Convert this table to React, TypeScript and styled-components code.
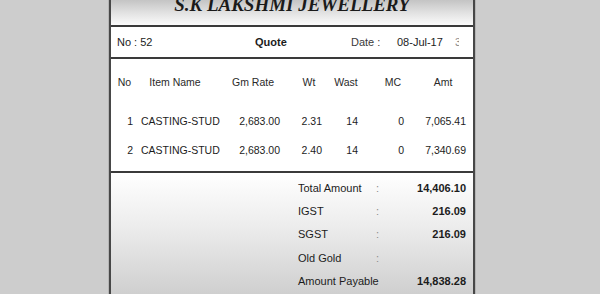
import React from 'react';
import styled, { createGlobalStyle } from 'styled-components';

const GlobalStyle = createGlobalStyle`
  html, body {
    margin: 0;
    padding: 0;
    background: #cdcdcd;
    overflow: hidden;
  }
`;

interface Item {
  no: number;
  name: string;
  rate: string;
  wt: string;
  wast: string;
  mc: string;
  amt: string;
}

interface Total {
  label: string;
  colon: boolean;
  value: string;
}

const items: Item[] = [
  { no: 1, name: 'CASTING-STUD', rate: '2,683.00', wt: '2.31', wast: '14', mc: '0', amt: '7,065.41' },
  { no: 2, name: 'CASTING-STUD', rate: '2,683.00', wt: '2.40', wast: '14', mc: '0', amt: '7,340.69' }
];

const totals: Total[] = [
  { label: 'Total Amount', colon: true, value: '14,406.10' },
  { label: 'IGST', colon: true, value: '216.09' },
  { label: 'SGST', colon: true, value: '216.09' },
  { label: 'Old Gold', colon: true, value: '' },
  { label: 'Amount Payable', colon: false, value: '14,838.28' }
];

const App: React.FC = () => (
  <Page>
    <GlobalStyle />
    <Receipt>
      <Header>
        <Title>S.K LAKSHMI JEWELLERY</Title>
      </Header>

      <InfoRow>
        <InfoText>No : 52</InfoText>
        <InfoText $bold>Quote</InfoText>
        <InfoText $muted>Date :</InfoText>
        <InfoText>08-Jul-17</InfoText>
        <Cut>3</Cut>
      </InfoRow>

      <Table>
        <HeadRow>
          <Cell $align='center'>No</Cell>
          <Cell $align='center'>Item Name</Cell>
          <Cell $align='center'>Gm Rate</Cell>
          <Cell $align='center'>Wt</Cell>
          <Cell $align='center'>Wast</Cell>
          <Cell $align='center'>MC</Cell>
          <Cell $align='center'>Amt</Cell>
        </HeadRow>
        {items.map((it) => (
          <BodyRow key={it.no}>
            <Cell $align='right' $pr={5}>{it.no}</Cell>
            <Cell $align='left' $pl={3}>{it.name}</Cell>
            <Cell $align='right' $pr={14}>{it.rate}</Cell>
            <Cell $align='right' $pr={2}>{it.wt}</Cell>
            <Cell $align='right' $pr={10}>{it.wast}</Cell>
            <Cell $align='right' $pr={14}>{it.mc}</Cell>
            <Cell $align='right' $pr={2}>{it.amt}</Cell>
          </BodyRow>
        ))}
      </Table>

      <Totals>
        {totals.map((t) => (
          <TotalRow key={t.label}>
            <TotalLabel>{t.label}</TotalLabel>
            <Colon>{t.colon ? ':' : ''}</Colon>
            <TotalValue>{t.value}</TotalValue>
          </TotalRow>
        ))}
      </Totals>
    </Receipt>
  </Page>
);

export default App;

const Page = styled.div`
  height: 294px;
  padding-left: 109px;
  font-family: 'Liberation Sans', Arial, sans-serif;
  color: #1c1c1c;
`;

const Receipt = styled.div`
  width: 362px;
  height: 294px;
  display: flex;
  flex-direction: column;
  border-left: 2px solid #474747;
  border-right: 2px solid #474747;
  box-shadow: -1px 0 0 #b5b5b5, 1px 0 0 #b5b5b5;
  background: #ffffff;
  overflow: hidden;
`;

const Header = styled.div`
  height: 25px;
  flex: none;
  display: flex;
  justify-content: center;
  align-items: flex-start;
  background: linear-gradient(to bottom, #c4c4c4 0%, #e4e4e4 55%, #fbfbfb 100%);
  border-bottom: 2px solid #3a3a3a;
`;

const Title = styled.div`
  margin-top: -5px;
  font-family: 'Liberation Serif', 'Times New Roman', serif;
  font-size: 19px;
  line-height: 19px;
  font-weight: bold;
  font-style: italic;
  color: #1a1a1a;
  white-space: nowrap;
`;

const InfoRow = styled.div`
  height: 30px;
  flex: none;
  display: grid;
  grid-template-columns: 138px 96px 46px 58px 1fr;
  align-items: center;
  padding-left: 6px;
  border-bottom: 2px solid #3a3a3a;
`;

const InfoText = styled.span<{ $bold?: boolean; $muted?: boolean }>`
  font-size: 11px;
  font-weight: ${(p) => (p.$bold ? 'bold' : 'normal')};
  color: ${(p) => (p.$muted ? '#3a3a3a' : '#1c1c1c')};
  white-space: nowrap;
`;

const Cut = styled.span`
  width: 4px;
  overflow: hidden;
  font-size: 11px;
  color: #8a8a8a;
`;

const Table = styled.div`
  height: 114px;
  flex: none;
  padding-top: 13px;
  box-sizing: border-box;
  border-bottom: 2px solid #3a3a3a;
`;

const columns = '27px 74px 82px 30px 44px 50px 50px';

const HeadRow = styled.div`
  display: grid;
  grid-template-columns: ${columns};
  height: 20px;
  align-items: center;
  margin-bottom: 14px;
  font-size: 10.5px;
  color: #2a2a2a;
`;

const BodyRow = styled.div`
  display: grid;
  grid-template-columns: ${columns};
  height: 29px;
  align-items: center;
  font-size: 10.5px;
`;

const Cell = styled.span<{ $align: 'left' | 'center' | 'right'; $pl?: number; $pr?: number }>`
  text-align: ${(p) => p.$align};
  padding-left: ${(p) => p.$pl ?? 0}px;
  padding-right: ${(p) => p.$pr ?? 0}px;
  white-space: nowrap;
`;

const Totals = styled.div`
  flex: 1;
  padding: 3px 7px 0 187px;
  background: linear-gradient(to bottom, #ffffff 0%, #ececec 45%, #cfcfcf 100%);
`;

const TotalRow = styled.div`
  display: grid;
  grid-template-columns: 78px 10px 1fr;
  height: 23.3px;
  align-items: center;
  font-size: 11px;
`;

const TotalLabel = styled.span`
  white-space: nowrap;
`;

const Colon = styled.span`
  color: #8c8c8c;
`;

const TotalValue = styled.span`
  text-align: right;
  font-weight: bold;
`;
